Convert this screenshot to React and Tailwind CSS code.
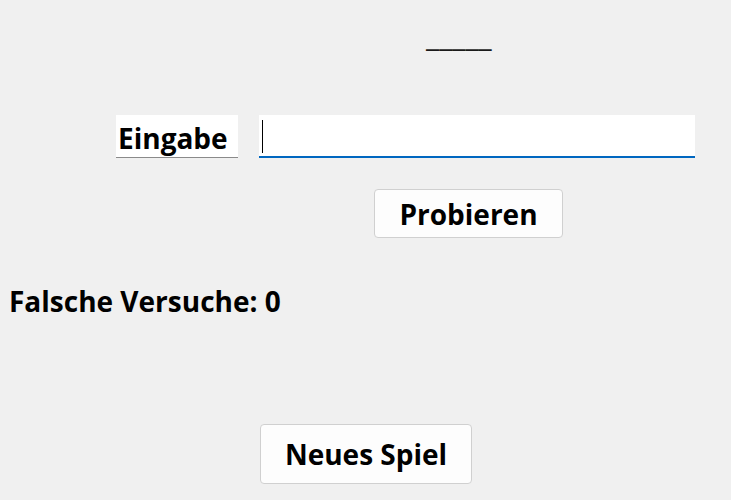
import React from "react";

export default function App() {
  return (
    <div
      className="w-[731px] h-[500px] bg-[#f0f0f0] overflow-hidden text-black"
      style={{ fontFamily: '"Open Sans", "Noto Sans", sans-serif' }}
    >
      {/* hidden word */}
      <div className="h-[68px] pl-[426px] pt-[20px] text-[30px] leading-[32px] text-[#1a1a1a]">_____</div>

      {/* input row */}
      <div className="flex items-start mt-[47px]">
        <div className="ml-[116px] w-[122px] h-[43px] bg-white border-b border-[#8a8a8a] flex items-center pl-[2px] font-bold text-[28px] leading-none pt-[3px]">
          Eingabe
        </div>
        <div className="ml-[21px] w-[436px] h-[43px] bg-white border-b-2 border-[#0067c0] relative">
          <span className="absolute left-[3px] top-[5px] w-px h-[33px] bg-black" />
        </div>
      </div>

      {/* guess button */}
      <div className="mt-[31px] ml-[374px]">
        <button className="w-[189px] h-[49px] bg-[#fdfdfd] border border-[#d0d0d0] rounded-[4px] font-bold text-[28px] leading-none">
          Probieren
        </button>
      </div>

      {/* wrong guesses */}
      <div className="mt-[44px] ml-[9px] font-bold text-[28px] leading-[38px]">Falsche Versuche: 0</div>

      {/* new game */}
      <div className="mt-[104px] ml-[260px]">
        <button className="w-[212px] h-[60px] bg-[#fdfdfd] border border-[#d0d0d0] rounded-[4px] font-bold text-[28px] leading-none">
          Neues Spiel
        </button>
      </div>
    </div>
  );
}
